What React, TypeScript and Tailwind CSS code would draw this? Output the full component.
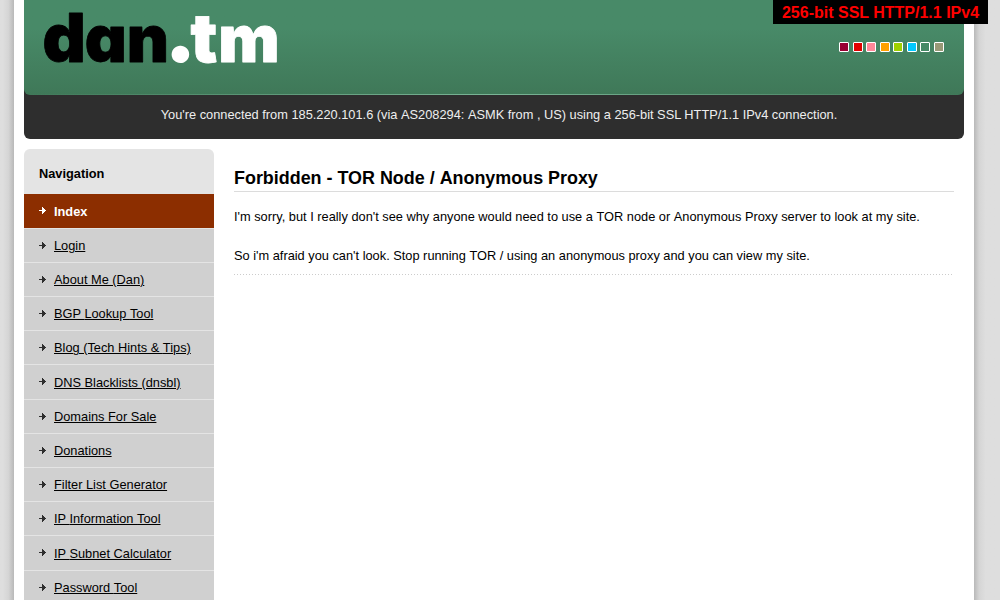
const swatches = [
  { color: "bg-[#990033]", gap: "" },
  { color: "bg-[#e10000]", gap: "ml-1" },
  { color: "bg-[#ff8899]", gap: "ml-[3px]" },
  { color: "bg-[#ffa000]", gap: "ml-1" },
  { color: "bg-[#a0d000]", gap: "ml-[3px]" },
  { color: "bg-[#00c8ff]", gap: "ml-1" },
  { color: "bg-[#468966]", gap: "ml-[3px]" },
  { color: "bg-[#999977]", gap: "ml-1" },
];

const links = [
  "Login",
  "About Me (Dan)",
  "BGP Lookup Tool",
  "Blog (Tech Hints & Tips)",
  "DNS Blacklists (dnsbl)",
  "Domains For Sale",
  "Donations",
  "Filter List Generator",
  "IP Information Tool",
  "IP Subnet Calculator",
  "Password Tool",
];

function Arrow({ className }: { className: string }) {
  return (
    <svg width="7" height="7" viewBox="0 0 7 7" shapeRendering="crispEdges" className={className}>
      <path fill="currentColor" d="M0 3h3V0h1v1h1v1h1v1h1v1H6v1H5v1H4v1H3V4H0z" />
    </svg>
  );
}

/* Keeps a space from being kerned against a capital A or T after it, or a P before it. */
function Spaced({ text }: { text: string }) {
  return (
    <>
      {text.split(/(?<= )(?=[AT])|(?<=P )/).map((part, i) => (
        <span key={i} className={i === 0 ? "" : "pl-[0.02px]"}>
          {part}
        </span>
      ))}
    </>
  );
}

function Logo() {
  return (
    <svg
      width="300"
      height="95"
      viewBox="0 0 300 95"
      className="overflow-visible font-['Inter',sans-serif] text-[65px] font-black [font-feature-settings:'cv11'] [stroke-linejoin:round]"
    >
      <g fill="#000" stroke="#000" strokeWidth="0.8">
        <text y="62" x="18.5" className="text-[67px]">d</text>
        <text y="62" x="60.8 102.8">an</text>
      </g>
      <text y="58.8" x="149.6" fill="#fff" stroke="#fff" strokeWidth="8" className="font-['Lato',sans-serif] text-[58px]">.</text>
      <g fill="#fff" stroke="#fff" strokeWidth="0.8">
        <text y="62" x="166.5" className="text-[67px]">t</text>
        <text y="62" x="194.3">m</text>
      </g>
    </svg>
  );
}

export default function App() {
  return (
    <div className="flex h-[600px] w-[1000px] overflow-hidden bg-[#dedede] font-['Liberation_Sans',Arial,sans-serif] text-[12.8px] leading-[19.2px] text-black">
      <div className="w-[14px] bg-linear-to-r from-[#dedede] from-20% via-[#d5d5d5] via-60% to-[#b9b9b9]" />
      <div className="w-[960px] bg-white px-[10px]">
        <div className="rounded-b-md bg-[#2e2e2e]">
          <header className="relative flex h-[95px] justify-between rounded-b-md bg-linear-to-b from-[#488a68] from-30% to-[#3f7858]">
            <Logo />
            <div className="mt-[42px] mr-5 flex">
              {swatches.map((s) => (
                <span key={s.color} className={`${s.gap} ${s.color} h-[10px] w-[10px] rounded-[1px] border border-white`} />
              ))}
            </div>
            <div className="absolute inset-x-0 bottom-0 h-px bg-linear-to-r from-transparent via-[#7ab596] to-transparent" />
          </header>
          <p className="h-11 pt-[10px] pl-[10px] text-center text-[#eee]">
            <Spaced text="You're connected from 185.220.101.6 (via AS208294: ASMK from , US) using a 256-bit SSL HTTP/1.1 IPv4 connection." />
          </p>
        </div>
        <div className="mt-[10px] flex gap-5">
          <nav className="w-[190px] rounded-t-md bg-[#e4e4e4]">
            <h2 className="h-[44.5px] pt-[15px] pl-[15px] font-bold">Navigation</h2>
            <ul>
              <li className="flex h-[34.2px] bg-[#8c2e00] pt-2 pl-[15px] font-bold text-white">
                <Arrow className="mt-[5.4px] mr-2" />
                Index
              </li>
              {links.map((label) => (
                <li key={label} className="flex h-[34.2px] border-t border-[#e4e4e4] bg-[#d0d0d0] pt-[7.2px] pl-[15px]">
                  <Arrow className="mt-[5.8px] mr-2 text-[#2e2e2e]" />
                  <a className="underline">
                    <Spaced text={label} />
                  </a>
                </li>
              ))}
            </ul>
          </nav>
          <main className="w-[720px] pt-[15px]">
            <h1 className="h-7 border-b border-[#dcdcdc] text-[17.92px] leading-7 font-bold">
              <Spaced text="Forbidden - TOR Node / Anonymous Proxy" />
            </h1>
            <p className="mt-[15px]">
              <Spaced text="I'm sorry, but I really don't see why anyone would need to use a TOR node or Anonymous Proxy server to look at my site." />
            </p>
            <p className="mt-5">
              <Spaced text="So i'm afraid you can't look. Stop running TOR / using an anonymous proxy and you can view my site." />
            </p>
            <div className="mt-[9px] h-px w-[719px] bg-[repeating-linear-gradient(90deg,#ccc_0_1px,transparent_1px_3px)]" />
          </main>
        </div>
      </div>
      <div className="w-[26px] bg-linear-to-l from-[#dedede] from-55% via-[#d5d5d5] via-80% to-[#b9b9b9]" />
      <div className="absolute top-0 left-[773px] h-6 w-[215px] bg-black pt-px text-center text-[16px] leading-6 font-bold text-[#f00]">
        256-bit SSL HTTP/1.1 IPv4
      </div>
    </div>
  );
}
